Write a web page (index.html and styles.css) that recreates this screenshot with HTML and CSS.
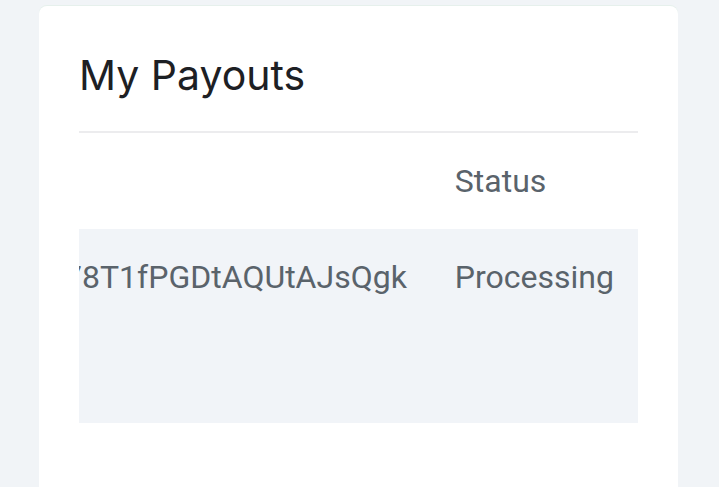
FILE: index.html
```html
<!DOCTYPE html>
<html lang="en">
<head>
<meta charset="utf-8">
<title>My Payouts</title>
<link rel="stylesheet" href="styles.css">
</head>
<body>
<div class="page">
  <section class="card">
    <header class="card-header">
      <h1 class="title">My Payouts</h1>
    </header>
    <div class="table-wrap">
      <table class="payouts">
        <thead>
          <tr>
            <th>Date</th>
            <th>Amount</th>
            <th>Payout ID</th>
            <th>Status</th>
          </tr>
        </thead>
        <tbody>
          <tr>
            <td>Aug 24, 2023<br>10:42 AM<br>Bank transfer</td>
            <td>$120.00</td>
            <td>po_1NhX2bQ78T1fPGDtAQUtAJsQgk</td>
            <td>Processing</td>
          </tr>
        </tbody>
      </table>
    </div>
  </section>
</div>
</body>
</html>
```
FILE: styles.css
```css
html, body {
  margin: 0;
  padding: 0;
}

body {
  background: #f1f4f7;
  font-family: Roboto, "Liberation Sans", sans-serif;
  height: 487px;
  overflow: hidden;
}

.page {
  padding: 6px 41px 0 39px;
}

.card {
  background: #ffffff;
  border-radius: 8px;
  padding: 45px 40px 120px;
  box-shadow: 0 -1px 0 #e6f0ec;
}

.card-header {
  padding-bottom: 32px;
  border-bottom: 2px solid #ececee;
}

.title {
  margin: 0;
  font-family: Inter, "Noto Sans", sans-serif;
  font-weight: 400;
  font-size: 41px;
  line-height: 48px;
  color: #1d2024;
}

.table-wrap {
  display: flex;
  justify-content: flex-end;
  overflow: hidden;
}

.payouts {
  flex: none;
  border-collapse: collapse;
  font-size: 32px;
  line-height: 48px;
  color: #5a636b;
}

.payouts th,
.payouts td {
  padding: 24px;
  text-align: left;
  vertical-align: top;
  font-weight: 400;
  white-space: nowrap;
}

.payouts tbody td {
  padding-bottom: 26px;
}

.payouts thead tr {
  background: #ffffff;
}

.payouts tbody tr {
  background: #f1f4f8;
}
```
